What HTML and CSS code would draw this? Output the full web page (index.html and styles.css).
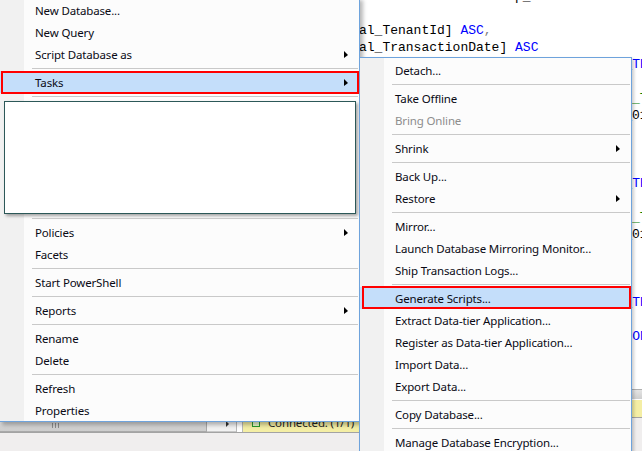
FILE: index.html
```html
<!DOCTYPE html>
<html>
<head>
<meta charset="utf-8">
<title>SSMS context menu</title>
<link rel="stylesheet" href="styles.css">
</head>
<body>
<div class="screen">
  <div class="left-pane">
    <div class="lp-body"></div>
    <div class="lp-status">
      <div class="hscroll"><span class="grip"></span></div>
      <div class="hbtn"><span class="hbtn-arrow"></span></div>
      <div class="splitter"></div>
      <div class="status"><span class="conn-icon"></span><span class="status-text">Connected. (1/1)</span></div>
    </div>
    <div class="lp-foot"></div>
  </div>
  <div class="right-pane">
    <div class="code">
      <div class="ln">                  Grp_</div>
      <div class="ln"> </div>
      <div class="ln">al_TenantId] <span class="kw">ASC</span><span class="pn">,</span></div>
      <div class="ln">al_TransactionDate] <span class="kw">ASC</span></div>
      <div class="ln"><span class="pn">)</span><span class="kw">WITH</span> <span class="pn">(</span><span class="kw">PAD_INDEX</span> <span class="pn">=</span> <span class="kw">OFF</span><span class="pn">,</span>    <span class="kw">SORT_IN_TEMPDB</span> <span class="pn">=</span> <span class="kw">OFF</span></div>
      <div class="ln"><span class="kw">GO</span></div>
      <div class="ln"><span class="cm">/****** Object:  Index [IDX_Journal_TransactionDate] ******/</span></div>
      <div class="ln"><span class="kw">CREATE INDEX</span> [IX_Journal_Date_2014_01]</div>
      <div class="ln"><span class="pn">(</span></div>
      <div class="ln">    [Journal_TenantId] <span class="kw">ASC</span></div>
      <div class="ln"><span class="pn">)</span></div>
      <div class="ln"><span class="pn">)</span><span class="kw">WITH</span> <span class="pn">(</span><span class="kw">PAD_INDEX</span> <span class="pn">=</span> <span class="kw">OFF</span><span class="pn">,</span>    <span class="kw">SORT_IN_TEMPDB</span> <span class="pn">=</span> <span class="kw">OFF</span></div>
      <div class="ln"><span class="kw">GO</span></div>
      <div class="ln"><span class="cm">/****** Object:  Index [IDX_Journal_TenantId] ******/</span></div>
      <div class="ln"><span class="kw">CREATE INDEX</span> [IX_Journal_Date_2014_01]</div>
      <div class="ln"><span class="pn">(</span></div>
      <div class="ln">    [Journal_TransactionDate] <span class="kw">ASC</span></div>
      <div class="ln"><span class="pn">)</span></div>
      <div class="ln"><span class="pn">)</span><span class="kw">WITH</span> <span class="pn">(</span><span class="kw">PAD_INDEX</span> <span class="pn">=</span> <span class="kw">OFF</span><span class="pn">,</span>    <span class="kw">SORT_IN_TEMPDB</span> <span class="pn">=</span> <span class="kw">OFF</span></div>
      <div class="ln"><span class="kw">GO</span></div>
      <div class="ln">      <span class="pn">)</span> <span class="kw">WITH</span> <span class="pn">(</span><span class="kw">DROP_EXISTING</span> <span class="pn">=</span> <span class="kw">OFF</span><span class="pn">)</span> <span class="kw">ON</span> [PRIMARY]</div>
      <div class="ln"><span class="kw">GO</span></div>
    </div>
    <div class="rp-hscroll"></div>
    <div class="rp-status"></div>
    <div class="rp-foot"></div>
  </div>

  <div class="menu menu-main">
    <div class="item">New Database...</div>
    <div class="item">New Query</div>
    <div class="item">Script Database as<span class="arrow"></span></div>
    <div class="sep"></div>
    <div class="item hot hot-tasks">Tasks<span class="arrow"></span></div>
    <div class="sep"></div>
    <div class="blank-box"></div>
    <div class="sep"></div>
    <div class="item">Policies<span class="arrow"></span></div>
    <div class="item">Facets</div>
    <div class="sep"></div>
    <div class="item">Start PowerShell</div>
    <div class="sep"></div>
    <div class="item">Reports<span class="arrow"></span></div>
    <div class="sep"></div>
    <div class="item">Rename</div>
    <div class="item">Delete</div>
    <div class="sep"></div>
    <div class="item">Refresh</div>
    <div class="item">Properties</div>
  </div>

  <div class="menu menu-sub">
    <div class="item">Detach...</div>
    <div class="sep"></div>
    <div class="item">Take Offline</div>
    <div class="item disabled">Bring Online</div>
    <div class="sep"></div>
    <div class="item">Shrink<span class="arrow"></span></div>
    <div class="sep"></div>
    <div class="item">Back Up...</div>
    <div class="item">Restore<span class="arrow"></span></div>
    <div class="sep"></div>
    <div class="item">Mirror...</div>
    <div class="item">Launch Database Mirroring Monitor...</div>
    <div class="item">Ship Transaction Logs...</div>
    <div class="sep"></div>
    <div class="item hot hot-gen">Generate Scripts...</div>
    <div class="item">Extract Data-tier Application...</div>
    <div class="item">Register as Data-tier Application...</div>
    <div class="item">Import Data...</div>
    <div class="item">Export Data...</div>
    <div class="sep"></div>
    <div class="item">Copy Database...</div>
    <div class="sep"></div>
    <div class="item">Manage Database Encryption...</div>
  </div>
</div>
</body>
</html>
```
FILE: styles.css
```css
* { box-sizing: border-box; }
html, body { margin: 0; padding: 0; }
body {
  width: 642px;
  height: 451px;
  overflow: hidden;
  background: #f0eeee;
  font-family: "Noto Sans", "Liberation Sans", sans-serif;
  font-size: 11.5px;
  letter-spacing: -0.15px;
  color: #000;
}
.screen {
  position: relative;
  width: 642px;
  height: 451px;
  display: flex;
  overflow: hidden;
}

/* left pane (mostly hidden under the menu) */
.left-pane {
  width: 359px;
  display: flex;
  flex-direction: column;
}
.lp-body { height: 413px; background: #fff; }
.lp-status {
  height: 19px;
  display: flex;
}
.hscroll {
  width: 207px;
  background: linear-gradient(#e2e2e2, #cdcdcd);
  border: 1px solid #a9a9a9;
  border-left: 0;
  position: relative;
}
.grip {
  position: absolute;
  left: 52px;
  bottom: 3px;
  width: 8px;
  height: 5px;
  background: repeating-linear-gradient(to right, #8c8c8c 0 1px, transparent 1px 3px);
}
.hbtn {
  width: 29px;
  background: #f2f2f2;
  border-bottom: 1px solid #c8c8c8;
  display: flex;
  align-items: flex-end;
  justify-content: flex-end;
  padding: 0 7px 4px 0;
}
.hbtn-arrow {
  width: 0; height: 0;
  border-left: 3px solid #333;
  border-top: 3px solid transparent;
  border-bottom: 3px solid transparent;
}
.splitter {
  width: 7px;
  background: #fff;
  border-left: 1px solid #b8b8b8;
  border-right: 1px solid #b8b8b8;
}
.status {
  flex: 1;
  min-width: 0;
  overflow: hidden;
  white-space: nowrap;
  background: #f4eea4;
  display: flex;
  align-items: center;
  padding-left: 9px;
  gap: 8px;
}
.conn-icon {
  flex: none;
  width: 8px; height: 8px;
  border: 1px solid #2a9a2a;
  background: #e8f6c8;
}
.status-text { color: #222; }
.lp-foot { flex: 1; background: #f0eeee; border-top: 1px solid #a3a3a3; }

/* right pane: the query editor */
.right-pane {
  flex: 1;
  display: flex;
  flex-direction: column;
  min-width: 0;
}
.code {
  height: 389px;
  background: #fff;
  overflow: hidden;
  font-family: "Liberation Mono", monospace;
  font-size: 13px;
  line-height: 17px;
  letter-spacing: 0;
  color: #000;
}
.code .ln:first-child { margin-top: -12px; }
.ln { white-space: pre; height: 17px; }
.kw { color: #0000ff; }
.cm { color: #008000; }
.pn { color: #808080; }
.rp-hscroll { height: 10px; background: linear-gradient(#e4e4e4, #cfcfcf); border-top: 1px solid #b0b0b0; }
.rp-status { height: 18px; background: #f4eea4; border-top: 1px solid #fff; }
.rp-foot { flex: 1; background: #f0eeee; border-top: 1px solid #a3a3a3; }

/* context menus */
.menu {
  position: absolute;
  border: 1px solid #6ea3dc;
  background: linear-gradient(to right, #f1f1f1 24px, #fcfcfc 24px);
  display: flex;
  flex-direction: column;
  z-index: 2;
}
.menu-main {
  left: -1px;
  top: -3px;
  width: 361px;
  padding: 1px 0 0 0;
  box-shadow: 3px 3px 4px rgba(0, 0, 0, 0.28);
}
.menu-sub {
  left: 359px;
  top: 57px;
  width: 273px;
  height: 420px;
  padding: 1px 0 0 0;
  z-index: 3;
  box-shadow: 2px 2px 3px rgba(0, 0, 0, 0.2);
}
.item {
  height: 22px;
  flex: none;
  display: flex;
  align-items: center;
  padding-left: 35px;
  white-space: nowrap;
  position: relative;
  color: #0a0a14;
}
.item.disabled { color: #8d8d8d; }
.arrow {
  margin-left: auto;
  margin-right: 11px;
  width: 0; height: 0;
  border-left: 4px solid #000;
  border-top: 4px solid transparent;
  border-bottom: 3px solid transparent;
}
.sep {
  flex: none;
  height: 0;
  border-top: 1px solid #c9c9c9;
  margin: 3px 1px 2px 32px;
}
.hot { background: #c4defa; }
.hot::after {
  content: "";
  position: absolute;
  border: 2px solid #ff0000;
}
.hot-tasks::after { top: 0; bottom: -1px; left: 1px; right: 0; }
.hot-gen::after { top: -1px; bottom: 0; left: 2px; right: 0; }

.blank-box {
  flex: none;
  height: 113px;
  margin: 2px 3px 1px 4px;
  background: #fff;
  border: 1px solid #2c5858;
  box-shadow: 2px 2px 3px rgba(0, 0, 0, 0.35);
}
```
